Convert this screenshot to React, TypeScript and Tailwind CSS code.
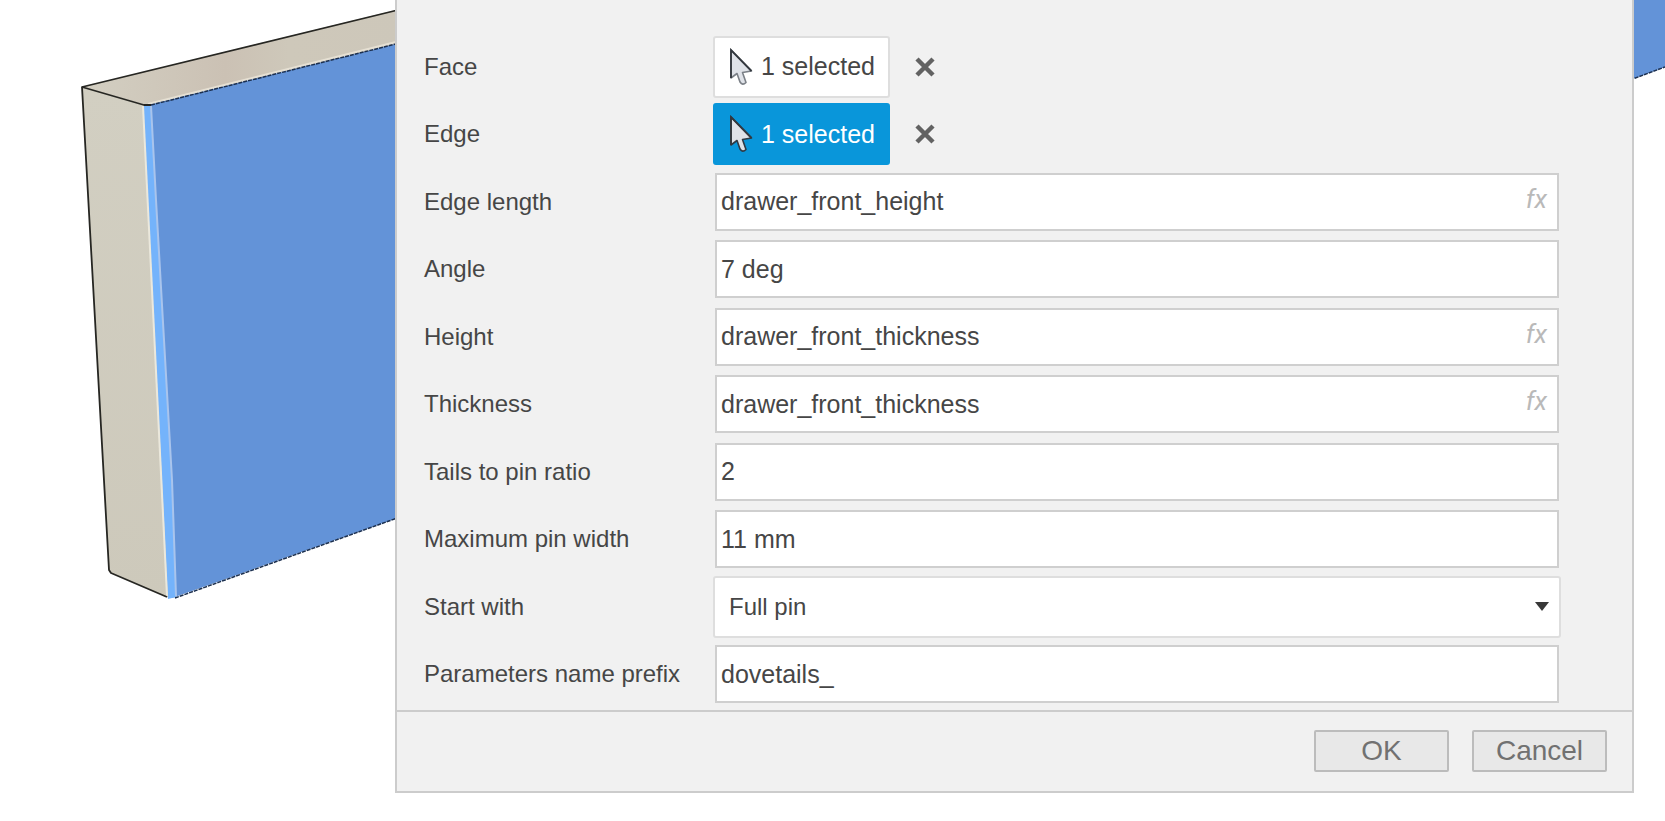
import type { ReactNode } from "react";

type TextField = { id: string; label: string; value: string; fx?: boolean };

const textFields: TextField[] = [
  { id: "edge-length", label: "Edge length", value: "drawer_front_height", fx: true },
  { id: "angle", label: "Angle", value: "7 deg" },
  { id: "height", label: "Height", value: "drawer_front_thickness", fx: true },
  { id: "thickness", label: "Thickness", value: "drawer_front_thickness", fx: true },
  { id: "ratio", label: "Tails to pin ratio", value: "2" },
  { id: "max-pin", label: "Maximum pin width", value: "11 mm" },
];

function Board() {
  return (
    <svg className="absolute inset-0 h-full w-full" aria-hidden="true">
      <defs>
        <linearGradient id="top-face" x1="0" x2="1">
          <stop offset="0" stopColor="#d3cfc2" />
          <stop offset="0.45" stopColor="#cbc1b4" />
          <stop offset="0.65" stopColor="#cec8ba" />
          <stop offset="1" stopColor="#cdc7ba" />
        </linearGradient>
        <linearGradient id="side-face" x1="0" x2="0" y1="0" y2="1">
          <stop offset="0" stopColor="#d2cfc2" />
          <stop offset="1" stopColor="#cdc9bb" />
        </linearGradient>
      </defs>
      {/* top, side and front faces */}
      <polygon points="82,87 400,9 400,43 146,105" fill="url(#top-face)" />
      <polygon points="82,87 144,105 169,598 109,572" fill="url(#side-face)" />
      <polygon points="148,105 400,43 400,517 172,598" fill="#6393d8" />
      <polygon points="1630,0 1665,0 1665,67 1630,80" fill="#6393d8" />
      {/* selected edge */}
      <path d="M148 104 L400 41" stroke="#e6e0d3" strokeWidth="2" fill="none" />
      <polygon points="143,106 151,106 156,200 172,480 176,597 168,599" fill="#74b3fb" />
      <path d="M143 106 L167 596" stroke="#ebe8dc" strokeWidth="2" fill="none" />
      <path d="M151 106 L156 200 L172 480 L176 596" stroke="#a9c4ec" strokeWidth="2" fill="none" />
      {/* outlines */}
      <g fill="none" stroke="#262622" strokeWidth="1.8" strokeLinejoin="round">
        <path d="M400 9.500 L82 87 L109 570 L111 573 L167 597" />
        <path d="M82 87 L144 105 L151 105" />
      </g>
      <g fill="none" stroke="#1c3050" strokeWidth="1.5" strokeDasharray="4 1">
        <path d="M151 105 L400 43" />
        <path d="M175 598 L400 517" />
        <path d="M1630 80 L1665 67" />
      </g>
    </svg>
  );
}

function Cursor({ active }: { active?: boolean }) {
  return (
    <svg viewBox="0 0 24 38" className="h-[38px] w-6 shrink-0" aria-hidden="true">
      <path
        d="M2 2 V30 L8 25.500 L11 34 Q13.500 38 17 34.500 L13.500 24.500 L22.500 23 Z"
        fill="#dfe2e8"
        stroke={active ? "#2f3a45" : "#7b8087"}
        strokeWidth="1.6"
        strokeLinejoin="round"
      />
      <path d="M2 30 V2 L22.500 23" fill="none" stroke="#33383e" strokeWidth="1.8" />
    </svg>
  );
}

function Row({ id, label, children }: { id: string; label: string; children: ReactNode }) {
  return (
    <div className="flex items-center">
      <label htmlFor={id} className="w-[289px] shrink-0 whitespace-nowrap text-[24px] leading-8">
        {label}
      </label>
      <div className="flex min-w-0 flex-1 items-center">{children}</div>
    </div>
  );
}

function Selection({ id, label, active }: { id: string; label: string; active?: boolean }) {
  return (
    <Row id={id} label={label}>
      <button
        id={id}
        type="button"
        className={
          active
            ? "flex h-[62px] w-[177px] items-center gap-2 rounded-[3px] border-2 border-[#0996da] bg-[#0996da] pl-[14px] text-[25px] whitespace-nowrap text-white"
            : "flex h-[62px] w-[177px] items-center gap-2 rounded-[3px] border-2 border-[#dedede] bg-white pl-[14px] text-[25px] whitespace-nowrap"
        }
      >
        <Cursor active={active} />1 selected
      </button>
      <button type="button" aria-label={"Clear " + label} className="ml-[23px] p-0.5">
        <svg viewBox="0 0 20 20" className="size-5" aria-hidden="true">
          <path d="M2 2 L18 18 M18 2 L2 18" stroke="#626262" strokeWidth="4.500" />
        </svg>
      </button>
    </Row>
  );
}

function Field({ id, label, value, fx }: TextField) {
  return (
    <Row id={id} label={label}>
      <div className="mx-0.5 flex h-[58px] flex-1 items-center border-2 border-[#cfcfcf] bg-white pr-2.5 pl-1">
        <input
          id={id}
          type="text"
          defaultValue={value}
          className="h-full min-w-0 flex-1 bg-transparent text-[25px] outline-none"
        />
        {fx && (
          <span className="pb-1.5 font-[Roboto,sans-serif] text-[26px] leading-8 text-[#b9b9b9] italic">fx</span>
        )}
      </div>
    </Row>
  );
}

export default function App() {
  return (
    <main className="relative min-h-screen bg-white pr-[31px] pl-[395px] font-['Liberation_Sans',Arial,sans-serif] text-[#464646]">
      <Board />
      <form className="relative border-2 border-t-0 border-[#cccccc] bg-[#f1f1f1]">
        <div className="grid h-[710px] auto-rows-fr pt-[33px] pr-[71px] pb-0.5 pl-[27px]">
          <Selection id="face" label="Face" />
          <Selection id="edge" label="Edge" active />
          {textFields.map((f) => (
            <Field key={f.id} {...f} />
          ))}
          <Row id="start-with" label="Start with">
            <div className="relative flex-1">
              <select
                id="start-with"
                className="h-[62px] w-full appearance-none rounded-[3px] border-2 border-[#dedede] bg-white px-[14px] text-[24px] outline-none"
              >
                <option>Full pin</option>
              </select>
              <svg
                viewBox="0 0 14 9"
                className="pointer-events-none absolute top-[26px] right-3 h-[9px] w-[14px]"
                aria-hidden="true"
              >
                <path d="M0 0 H14 L7 9 Z" fill="#383838" />
              </svg>
            </div>
          </Row>
          <Field id="prefix" label="Parameters name prefix" value="dovetails_" />
        </div>
        <footer className="flex justify-end gap-[23px] border-t-2 border-[#cccccc] pt-[18px] pr-[25px] pb-[19px] text-[28px] leading-8 text-[#717171]">
          <button type="button" className="h-[42px] w-[135px] rounded-[2px] border-2 border-[#bcbcbc] bg-[#e8e8e8]">
            OK
          </button>
          <button type="button" className="h-[42px] w-[135px] rounded-[2px] border-2 border-[#bcbcbc] bg-[#e8e8e8]">
            Cancel
          </button>
        </footer>
      </form>
    </main>
  );
}
